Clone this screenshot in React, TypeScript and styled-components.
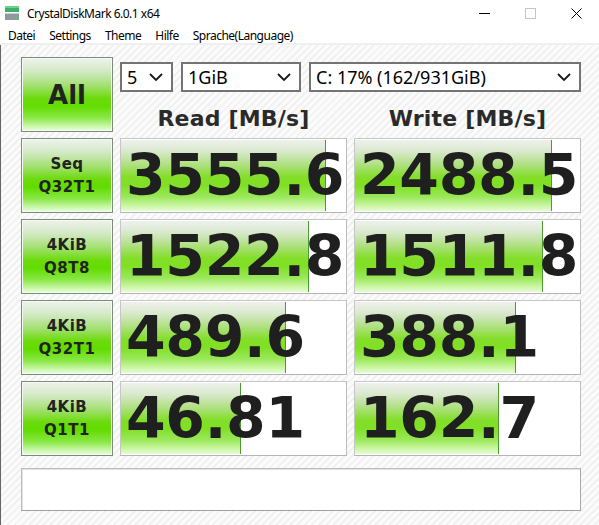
import { Fragment } from "react";
import styled, { createGlobalStyle } from "styled-components";

const GlobalStyle = createGlobalStyle`
  html, body {
    margin: 0;
    padding: 0;
    background: #ffffff;
  }

  #root {
    width: 599px;
    height: 525px;
    overflow: hidden;
  }
`;

const Window = styled.div`
  width: 599px;
  height: 525px;

  display: flex;
  flex-direction: column;

  font-family: "Noto Sans", "Open Sans", sans-serif;
  color: #000;
`;

const TitleBar = styled.div`
  height: 27px;

  display: flex;
  align-items: center;

  background: #ffffff;
`;

const AppIcon = styled.svg`
  width: 16px;
  height: 16px;
  margin: 0 7px 1px 4px;
`;

const Title = styled.span`
  flex: 1;
  font-size: 12px;
  letter-spacing: -0.5px;
  margin-bottom: 1px;
`;

const WinButton = styled.div`
  width: 46px;
  height: 27px;

  display: flex;
  justify-content: center;
  align-items: center;
`;

const MenuBar = styled.div`
  height: 16px;
  padding: 0 0 0 1px;

  display: flex;
  align-items: center;

  font-size: 12px;
  letter-spacing: -0.5px;
  border-bottom: 2px solid #f0f0f0;
`;

const MenuItem = styled.span`
  padding: 0 7px;
`;

const Content = styled.div`
  flex: 1;
  padding: 12px 18px 0 20px;

  border-left: 1px solid #646464;
  background: repeating-linear-gradient(
    135deg,
    #fbfbfb 0px,
    #fbfbfb 3px,
    #f1f1f1 3px,
    #f1f1f1 5px
  );
`;

const Board = styled.div`
  display: grid;
  grid-template-columns: 92px 227px 227px;
  grid-template-rows: repeat(5, 75px);
  column-gap: 7px;
  row-gap: 6px;
`;

const GreenButton = styled.div<{ $big?: boolean }>`
  box-sizing: border-box;

  display: flex;
  flex-direction: column;
  justify-content: center;
  align-items: center;

  border: 1px solid #7f8a7f;
  box-shadow: inset 0 0 0 1px #f4fbf0;
  background: linear-gradient(
    to bottom,
    #eef2ec 0%,
    #d4e9c6 18%,
    #a2e070 38%,
    #6cdb0c 55%,
    #62dc00 66%,
    #8ae846 82%,
    #cdf8b0 94%,
    #eafde0 100%
  );

  font-family: "DejaVu Sans", Verdana, sans-serif;
  font-weight: bold;
  font-size: ${(p) => (p.$big ? "26px" : "15px")};
  line-height: ${(p) => (p.$big ? "1" : "23px")};
  letter-spacing: ${(p) => (p.$big ? "0" : "0.5px")};
  color: #222;
`;

const HeadArea = styled.div`
  grid-column: 2 / 4;

  display: flex;
  flex-direction: column;
`;

const Selects = styled.div`
  margin-top: 5px;

  display: flex;
  gap: 8px;
`;

const Select = styled.div<{ $w: number }>`
  box-sizing: border-box;
  width: ${(p) => p.$w}px;
  height: 30px;
  padding: 0 8px 0 5px;

  display: flex;
  align-items: center;
  justify-content: space-between;

  border: 2px solid #747474;
  background: #ffffff;

  font-size: 18px;
  color: #000;
`;

const Heads = styled.div`
  flex: 1;

  display: grid;
  grid-template-columns: 1fr 1fr;
  column-gap: 7px;
  align-items: end;
`;

const Head = styled.div`
  text-align: center;

  font-family: "DejaVu Sans", Verdana, sans-serif;
  font-weight: bold;
  font-size: 22px;
  line-height: 26px;
  letter-spacing: 0.2px;
  color: #2a2a2a;
`;

const Cell = styled.div`
  position: relative;
  box-sizing: border-box;
  overflow: hidden;

  display: flex;
  align-items: center;

  border: 1px solid #c6c6c6;
  border-bottom-color: #b4b4b4;
  border-right-color: #bcbcbc;
  background: #ffffff;
`;

const Bar = styled.div`
  position: absolute;
  top: 1px;
  bottom: 1px;
  left: 0;

  border-right: 1px solid #4f9a30;
  background: linear-gradient(
    to bottom,
    #eef1ec 0%,
    #dbe9d0 15%,
    #aee080 35%,
    #84de2a 52%,
    #80e024 64%,
    #9ae85a 80%,
    #cdf6a6 93%,
    #e6fbd6 100%
  );
`;

const Value = styled.span`
  position: relative;
  padding-left: 5px;

  font-family: "DejaVu Sans", Verdana, sans-serif;
  font-weight: bold;
  font-size: 57px;
  line-height: 1;
  letter-spacing: -0.3px;
  white-space: nowrap;
  color: #1f1f1f;
`;

const Comment = styled.div`
  box-sizing: border-box;
  height: 43px;
  margin: 12px 0 0 0;

  border: 1px solid #bdbdbd;
  border-bottom-color: #a0a0a0;
  border-right-color: #a8a8a8;
  box-shadow: inset 1px 1px 0 #e2e2e2;
  background: #ffffff;
`;

const Chevron = () => (
  <svg width="14" height="8" viewBox="0 0 14 8">
    <path d="M1 1 L7 7 L13 1" fill="none" stroke="#1a1a1a" strokeWidth="1.8" />
  </svg>
);

type Row = {
  name: string;
  mode: string;
  read: string;
  write: string;
  readFill: number;
  writeFill: number;
};

const rows: Row[] = [
  { name: "Seq", mode: "Q32T1", read: "3555.6", write: "2488.5", readFill: 0.907, writeFill: 0.871 },
  { name: "4KiB", mode: "Q8T8", read: "1522.8", write: "1511.8", readFill: 0.831, writeFill: 0.831 },
  { name: "4KiB", mode: "Q32T1", read: "489.6", write: "388.1", readFill: 0.729, writeFill: 0.711 },
  { name: "4KiB", mode: "Q1T1", read: "46.81", write: "162.7", readFill: 0.529, writeFill: 0.636 },
];

const Score = ({ value, fill }: { value: string; fill: number }) => (
  <Cell>
    <Bar style={{ width: `${fill * 100}%` }} />
    <Value>{value}</Value>
  </Cell>
);

const App = () => {
  return (
    <>
      <GlobalStyle />
      <Window>
        <TitleBar>
          <AppIcon viewBox="0 0 16 16">
            <rect x="1" y="1" width="14" height="6" fill="#3fae6a" />
            <rect x="1" y="1" width="14" height="2" fill="#6fd08f" />
            <rect x="1" y="8" width="14" height="7" fill="#8c9a9c" />
            <rect x="1" y="8" width="14" height="1" fill="#c5cfd0" />
            <rect x="11" y="11" width="3" height="2" fill="#3fd060" />
          </AppIcon>
          <Title>CrystalDiskMark 6.0.1 x64</Title>
          <WinButton>
            <svg width="11" height="11" viewBox="0 0 11 11">
              <line x1="0" y1="5.5" x2="11" y2="5.5" stroke="#000" strokeWidth="1" />
            </svg>
          </WinButton>
          <WinButton>
            <svg width="11" height="11" viewBox="0 0 11 11">
              <rect x="0.5" y="0.5" width="10" height="10" fill="none" stroke="#c4c4c4" strokeWidth="1" />
            </svg>
          </WinButton>
          <WinButton>
            <svg width="11" height="11" viewBox="0 0 11 11">
              <path d="M0.5 0.5 L10.5 10.5 M10.5 0.5 L0.5 10.5" stroke="#000" strokeWidth="1" />
            </svg>
          </WinButton>
        </TitleBar>
        <MenuBar>
          <MenuItem>Datei</MenuItem>
          <MenuItem>Settings</MenuItem>
          <MenuItem>Theme</MenuItem>
          <MenuItem>Hilfe</MenuItem>
          <MenuItem>Sprache(Language)</MenuItem>
        </MenuBar>
        <Content>
          <Board>
            <GreenButton $big>All</GreenButton>
            <HeadArea>
              <Selects>
                <Select $w={53}>
                  <span>5</span>
                  <Chevron />
                </Select>
                <Select $w={120}>
                  <span>1GiB</span>
                  <Chevron />
                </Select>
                <Select $w={272}>
                  <span>C: 17% (162/931GiB)</span>
                  <Chevron />
                </Select>
              </Selects>
              <Heads>
                <Head>Read [MB/s]</Head>
                <Head>Write [MB/s]</Head>
              </Heads>
            </HeadArea>
            {rows.map((r, i) => (
              <Fragment key={i}>
                <GreenButton>
                  <span>{r.name}</span>
                  <span>{r.mode}</span>
                </GreenButton>
                <Score value={r.read} fill={r.readFill} />
                <Score value={r.write} fill={r.writeFill} />
              </Fragment>
            ))}
          </Board>
          <Comment />
        </Content>
      </Window>
    </>
  );
};

export default App;
